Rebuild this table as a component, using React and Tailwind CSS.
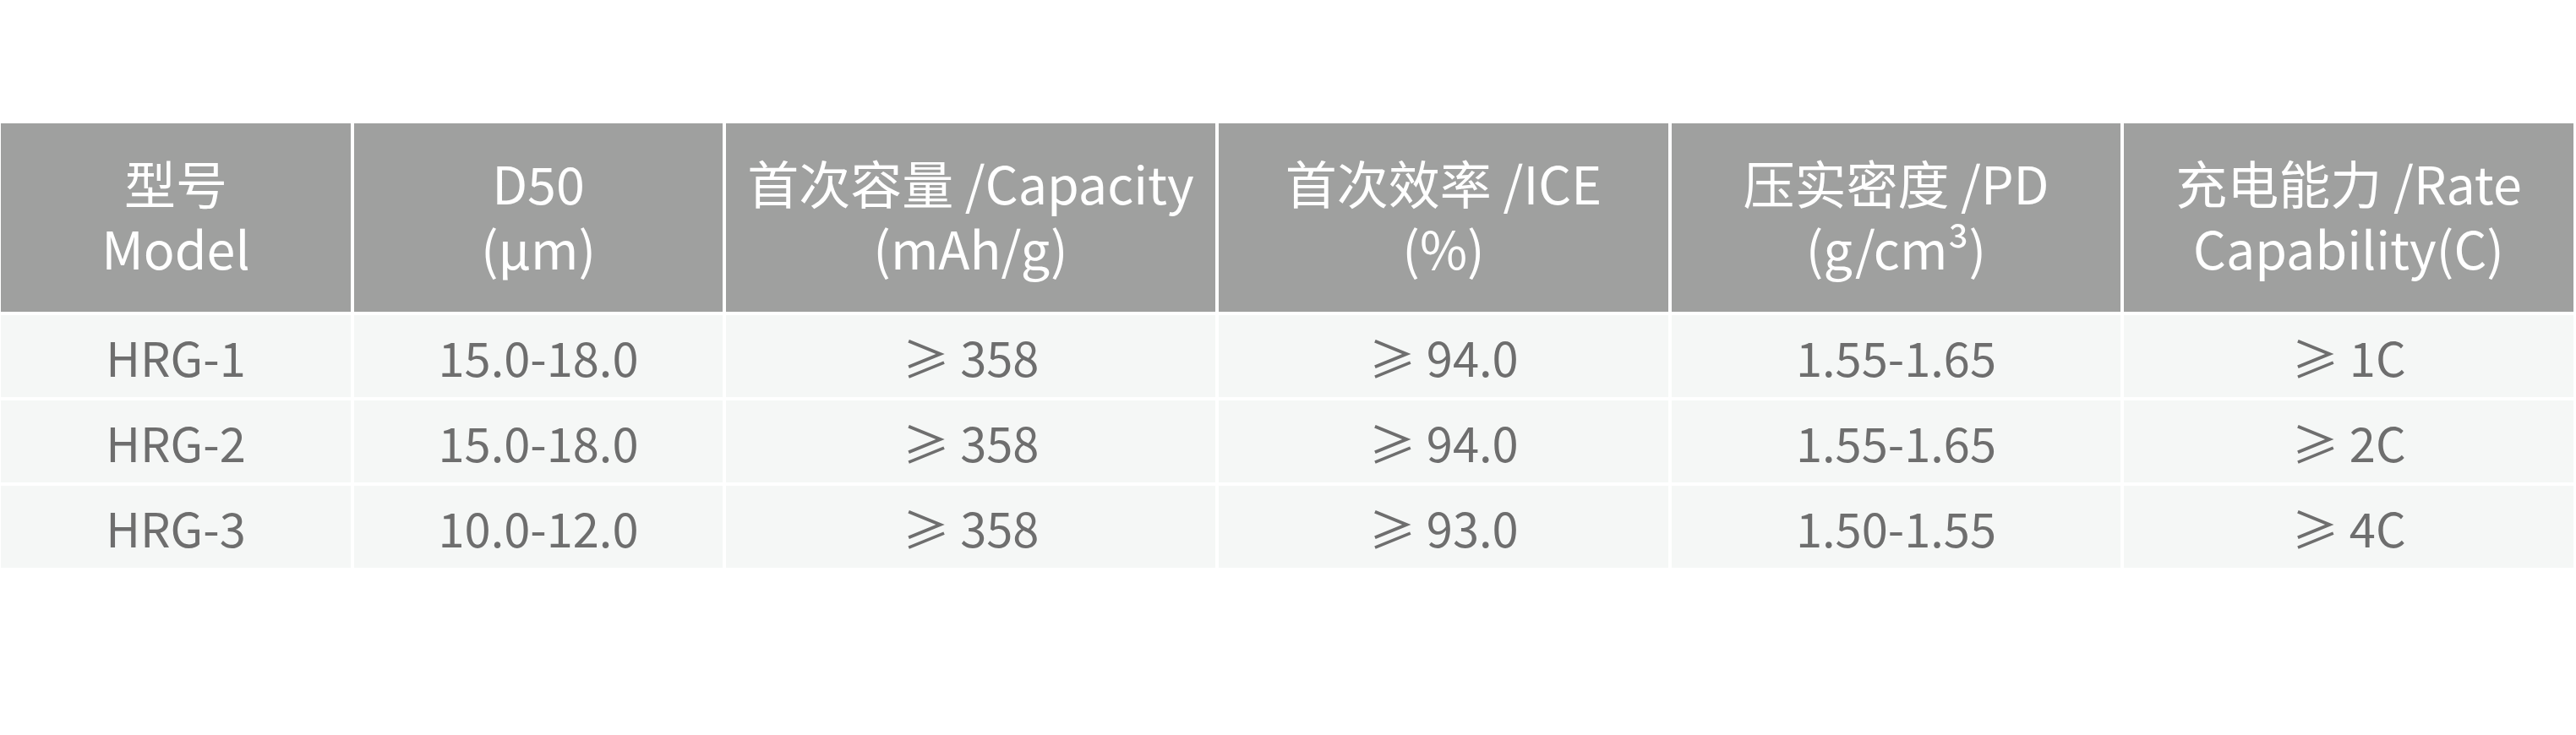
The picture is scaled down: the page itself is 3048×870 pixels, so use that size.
import React from "react";

const headers = [
  ["型号", "Model"],
  ["D50", "(μm)"],
  ["首次容量 /Capacity", "(mAh/g)"],
  ["首次效率 /ICE", "(%)"],
  ["压实密度 /PD", "(g/cm³)"],
  ["充电能力 /Rate", "Capability(C)"],
];

const rows = [
  ["HRG-1", "15.0-18.0", "≥ 358", "≥ 94.0", "1.55-1.65", "≥ 1C"],
  ["HRG-2", "15.0-18.0", "≥ 358", "≥ 94.0", "1.55-1.65", "≥ 2C"],
  ["HRG-3", "10.0-12.0", "≥ 358", "≥ 93.0", "1.50-1.55", "≥ 4C"],
];

export default function App() {
  return (
    <div
      className="w-[3048px] h-[870px] bg-white pt-[146px] pl-[1px]"
      style={{ fontFamily: '"Noto Sans CJK SC", "Noto Sans", sans-serif' }}
    >
      <div className="grid grid-cols-[414px_436px_579px_532px_531px_532px] gap-[4px]">
        {headers.map((h, i) => (
          <div
            key={"h" + i}
            className="h-[223px] bg-[#9fa09f] text-white text-[61px] leading-[77px] pb-[8px] flex flex-col items-center justify-center text-center whitespace-nowrap"
          >
            <div>{h[0]}</div>
            <div>{h[1]}</div>
          </div>
        ))}
        {rows.map((r, ri) =>
          r.map((c, ci) => (
            <div
              key={ri + "-" + ci}
              className="h-[97px] bg-[#f5f7f6] text-[#6e6e6e] text-[56px] flex items-center justify-center whitespace-nowrap"
            >
              {c}
            </div>
          ))
        )}
      </div>
    </div>
  );
}
